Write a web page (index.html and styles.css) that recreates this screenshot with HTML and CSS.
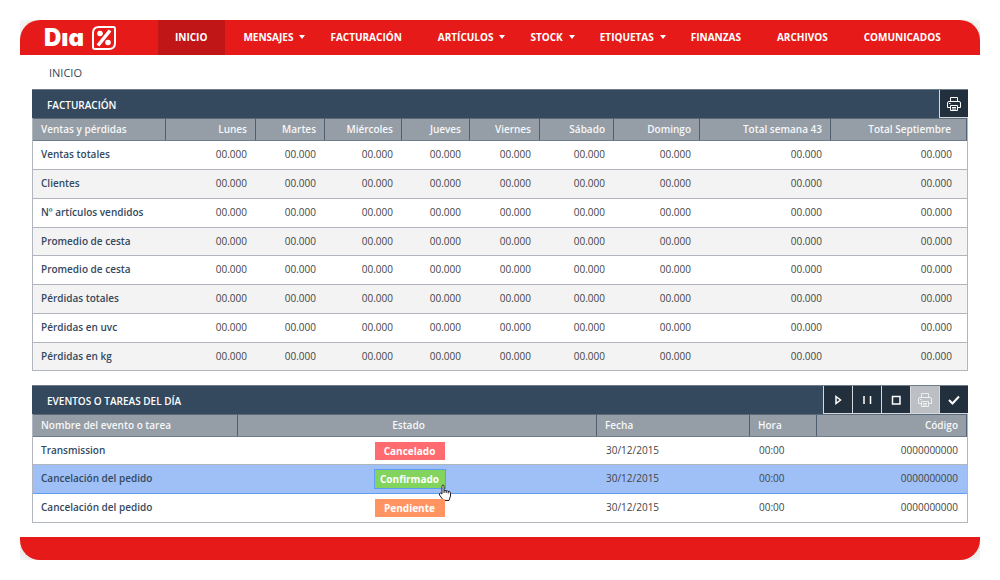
FILE: index.html
```html
<!DOCTYPE html>
<html lang="es">
<head>
<meta charset="UTF-8">
<meta name="viewport" content="width=device-width, initial-scale=1.0">
<title>Dia - Inicio</title>
<link rel="stylesheet" href="styles.css">
</head>
<body>
    <div class="window">
        <header class="topbar">
            <a href="#" class="logo">
                <span>Dıa</span>
                <svg width="24" height="24" viewBox="0 0 24 24" fill="none" stroke="#fff">
                    <path d="M7 1H21.500Q23 1 23 3V17Q23 23 17 23H3Q1 23 1 21V7Q1 1 7 1Z" stroke-width="2"/>
                    <path d="M18 4.500L6 19.500" stroke-width="3.500"/>
                    <circle cx="8" cy="7.500" r="2.800" fill="#fff" stroke="none"/>
                    <circle cx="16" cy="16.500" r="2.800" fill="#fff" stroke="none"/>
                </svg>
            </a>
            <nav class="menu">
                <a href="#" class="active">INICIO</a>
                <a href="#" class="dropdown">MENSAJES</a>
                <a href="#">FACTURACIÓN</a>
                <a href="#" class="dropdown">ARTÍCULOS</a>
                <a href="#" class="dropdown">STOCK</a>
                <a href="#" class="dropdown">ETIQUETAS</a>
                <a href="#">FINANZAS</a>
                <a href="#">ARCHIVOS</a>
                <a href="#">COMUNICADOS</a>
            </nav>
        </header>

        <main>
            <h1>INICIO</h1>

            <section class="panel">
                <div class="panel-title">
                    <h2>FACTURACIÓN</h2>
                    <div class="tools">
                        <button type="button" aria-label="Imprimir">
                            <svg width="16" height="16" viewBox="0 0 16 16" fill="none" stroke="currentColor"><path d="M4.500 5V1.500H11.500V5M4.500 11.500H1.500V7Q1.500 5.500 3 5.500H13Q14.500 5.500 14.500 7V11.500H11.500M4.500 9.500H11.500V14.500H4.500ZM6 11.500H10M6 13H10M3 7.500H4.500"/></svg>
                        </button>
                    </div>
                </div>
                <table class="sales">
                    <colgroup>
                        <col class="c-name"><col class="c-lun"><col class="c-mar"><col class="c-mie"><col class="c-jue">
                        <col class="c-vie"><col class="c-sab"><col class="c-dom"><col class="c-semana"><col>
                    </colgroup>
                    <thead>
                        <tr><th>Ventas y pérdidas</th><th>Lunes</th><th>Martes</th><th>Miércoles</th><th>Jueves</th><th>Viernes</th><th>Sábado</th><th>Domingo</th><th>Total semana 43</th><th>Total Septiembre</th></tr>
                    </thead>
                    <tbody>
                        <tr><th>Ventas totales</th><td>00.000</td><td>00.000</td><td>00.000</td><td>00.000</td><td>00.000</td><td>00.000</td><td>00.000</td><td>00.000</td><td>00.000</td></tr>
                        <tr><th>Clientes</th><td>00.000</td><td>00.000</td><td>00.000</td><td>00.000</td><td>00.000</td><td>00.000</td><td>00.000</td><td>00.000</td><td>00.000</td></tr>
                        <tr><th>Nº artículos vendidos</th><td>00.000</td><td>00.000</td><td>00.000</td><td>00.000</td><td>00.000</td><td>00.000</td><td>00.000</td><td>00.000</td><td>00.000</td></tr>
                        <tr><th>Promedio de cesta</th><td>00.000</td><td>00.000</td><td>00.000</td><td>00.000</td><td>00.000</td><td>00.000</td><td>00.000</td><td>00.000</td><td>00.000</td></tr>
                        <tr><th>Promedio de cesta</th><td>00.000</td><td>00.000</td><td>00.000</td><td>00.000</td><td>00.000</td><td>00.000</td><td>00.000</td><td>00.000</td><td>00.000</td></tr>
                        <tr><th>Pérdidas totales</th><td>00.000</td><td>00.000</td><td>00.000</td><td>00.000</td><td>00.000</td><td>00.000</td><td>00.000</td><td>00.000</td><td>00.000</td></tr>
                        <tr><th>Pérdidas en uvc</th><td>00.000</td><td>00.000</td><td>00.000</td><td>00.000</td><td>00.000</td><td>00.000</td><td>00.000</td><td>00.000</td><td>00.000</td></tr>
                        <tr><th>Pérdidas en kg</th><td>00.000</td><td>00.000</td><td>00.000</td><td>00.000</td><td>00.000</td><td>00.000</td><td>00.000</td><td>00.000</td><td>00.000</td></tr>
                    </tbody>
                </table>
            </section>

            <section class="panel">
                <div class="panel-title">
                    <h2>EVENTOS O TAREAS DEL DÍA</h2>
                    <div class="tools">
                        <button type="button" aria-label="Iniciar">
                            <svg width="16" height="16" viewBox="0 0 16 16" fill="none" stroke="currentColor" stroke-width="1.500"><path d="M6 4.500L10.500 8L6 11.500Z"/></svg>
                        </button>
                        <button type="button" aria-label="Pausar">
                            <svg width="16" height="16" viewBox="0 0 16 16" fill="none" stroke="currentColor" stroke-width="1.500"><path d="M5 4V12M11.500 4V12"/></svg>
                        </button>
                        <button type="button" aria-label="Detener">
                            <svg width="16" height="16" viewBox="0 0 16 16" fill="none" stroke="currentColor" stroke-width="1.500"><path d="M4.500 4.500H12V12H4.500Z"/></svg>
                        </button>
                        <button type="button" aria-label="Imprimir" disabled>
                            <svg width="16" height="16" viewBox="0 0 16 16" fill="none" stroke="currentColor"><path d="M4.500 5V1.500H11.500V5M4.500 11.500H1.500V7Q1.500 5.500 3 5.500H13Q14.500 5.500 14.500 7V11.500H11.500M4.500 9.500H11.500V14.500H4.500ZM6 11.500H10M6 13H10M3 7.500H4.500"/></svg>
                        </button>
                        <button type="button" aria-label="Confirmar">
                            <svg width="16" height="16" viewBox="0 0 16 16" fill="none" stroke="currentColor" stroke-width="2"><path d="M3 8L6.500 11.500L13 4.500"/></svg>
                        </button>
                    </div>
                </div>
                <table class="events">
                    <colgroup>
                        <col class="c-evento"><col class="c-estado"><col class="c-fecha"><col class="c-hora"><col>
                    </colgroup>
                    <thead>
                        <tr><th>Nombre del evento o tarea</th><th>Estado</th><th>Fecha</th><th>Hora</th><th>Código</th></tr>
                    </thead>
                    <tbody>
                        <tr><th>Transmission</th><td><span class="badge cancelado">Cancelado</span></td><td>30/12/2015</td><td>00:00</td><td>0000000000</td></tr>
                        <tr class="selected">
                            <th>Cancelación del pedido</th>
                            <td>
                                <span class="badge confirmado">Confirmado
                                    <svg class="pointer" width="14" height="18" viewBox="0 0 14 18" fill="#fff" stroke="#222"><path d="M4 10V2.500Q4 1 5 1T6 2.500V7Q7 5.500 8 7Q9.500 6 10 7.500Q12 6.500 12.500 9V12L11 16.500H5.500L1.500 11Q1 9 2.500 9ZM6 7V9M8.200 7V9M10.200 7.500V9.500"/></svg>
                                </span>
                            </td>
                            <td>30/12/2015</td><td>00:00</td><td>0000000000</td>
                        </tr>
                        <tr><th>Cancelación del pedido</th><td><span class="badge pendiente">Pendiente</span></td><td>30/12/2015</td><td>00:00</td><td>0000000000</td></tr>
                    </tbody>
                </table>
            </section>
        </main>

        <footer></footer>
    </div>
</body>
</html>
```
FILE: styles.css
```css
* {
    box-sizing: border-box;
}
body {
    margin: 20px;
    background: #fff;
    color: #444;
    font-family: "Open Sans", sans-serif;
    font-size: 10px;
    line-height: 14px;
}
.window {
    border-radius: 20px;
    overflow: hidden;
    background: #fff;
    box-shadow: 0 2px 25px rgba(0, 0, 0, 0.2);
}

/* top bar */
.topbar {
    display: flex;
    height: 35px;
    background: #e51a19;
}
.logo {
    display: flex;
    align-items: center;
    justify-content: space-between;
    width: 96px;
    margin-right: 42px;
    flex-shrink: 0;
    padding-left: 24px;
    color: #fff;
    font-family: Inter, sans-serif;
    font-feature-settings: "cv11";
    font-size: 24px;
    font-weight: 900;
    text-decoration: none;
}
.menu {
    display: flex;
}
.menu a {
    display: flex;
    align-items: center;
    padding: 0 18px 1px;
    color: #fff;
    font-weight: bold;
    text-decoration: none;
}
.menu .active {
    background: #c01617;
    padding-left: 17px;
}
.menu .dropdown {
    padding-right: 7px;
}
.dropdown::after {
    content: "";
    margin-left: 6px;
    border: 3px solid transparent;
    border-top: 4px solid #fff;
    border-bottom: 0;
}

main {
    padding: 0 12px;
}
h1 {
    margin: 0;
    padding: 11px 17px 9px;
    color: #34495e;
    font-size: 11px;
    font-weight: normal;
}

/* panels */
.panel {
    margin-bottom: 14px;
}
.panel-title {
    display: flex;
    justify-content: space-between;
    align-items: center;
    height: 29px;
    padding-left: 15px;
    background: #34495e;
    border-top: 1px solid #6f7d8b;
}
h2 {
    margin: 0;
    padding-top: 1px;
    color: #fff;
    font-size: 10px;
    font-weight: 600;
}
.tools {
    display: flex;
}
.tools button {
    display: flex;
    align-items: center;
    justify-content: center;
    width: 29px;
    height: 28px;
    padding: 0;
    border: 0;
    border-left: 1px solid #d5d9dd;
    border-bottom: 1px solid #d5d9dd;
    background: #222f3c;
    color: #fff;
    cursor: pointer;
}
.tools button:disabled {
    background: #bcc0c4;
    color: #eee;
    cursor: default;
}

/* tables */
table {
    width: 100%;
    table-layout: fixed;
    border-spacing: 0;
    border: 1px solid #b0b5be;
    border-width: 0 1px;
}
th, td {
    padding: 0 8px 2px;
    border-bottom: 1px solid #b0b5be;
    text-align: right;
    white-space: nowrap;
}
td {
    padding: 0 9px 2px;
}
th {
    color: #34495e;
    font-weight: 600;
}
th:first-child {
    text-align: left;
}
thead th {
    height: 23px;
    background: #959da6;
    color: #f6f7f8;
    border-top: 1px solid #5c6b7a;
    border-right: 1px solid #4f6072;
    border-bottom: 1px solid #6f7d8b;
}
tbody th, tbody td {
    height: 29px;
}
.sales tbody tr:nth-child(even) {
    background: #f3f3f3;
}
.sales tr:nth-child(4n) > * {
    height: 28px;
}
.sales th:last-child, .sales td:last-child {
    padding-right: 15px;
}
.c-name { width: 133px; }
.c-lun { width: 90px; }
.c-mar { width: 69px; }
.c-mie { width: 77px; }
.c-jue { width: 68px; }
.c-vie { width: 70px; }
.c-sab { width: 74px; }
.c-dom { width: 86px; }
.c-semana { width: 131px; }

.events th, .events td {
    text-align: left;
}
.events tr > :nth-child(2) {
    padding-right: 25px;
    text-align: center;
}
.events tr > :last-child {
    text-align: right;
}
.events tbody tr:first-child > * {
    height: 28px;
}
.c-evento { width: 205px; }
.c-estado { width: 359px; }
.c-fecha { width: 153px; }
.c-hora { width: 67px; }
.selected {
    background: #9fc0f7;
}
.events .selected > * {
    border-bottom-color: #5f9df5;
}
.badge {
    display: inline-block;
    position: relative;
    width: 70px;
    color: #fff;
    font-weight: bold;
    line-height: 18px;
    vertical-align: bottom;
}
.events td:nth-child(2) {
    padding-bottom: 0;
}
.cancelado {
    background: #ff6b6e;
}
.confirmado {
    background: #82d45e;
    outline: 1px solid #5f9df5;
}
.pendiente {
    background: #ff9462;
}
.pointer {
    position: absolute;
    right: -7px;
    bottom: -14px;
}

footer {
    height: 23px;
    background: #e51a19;
}
```
